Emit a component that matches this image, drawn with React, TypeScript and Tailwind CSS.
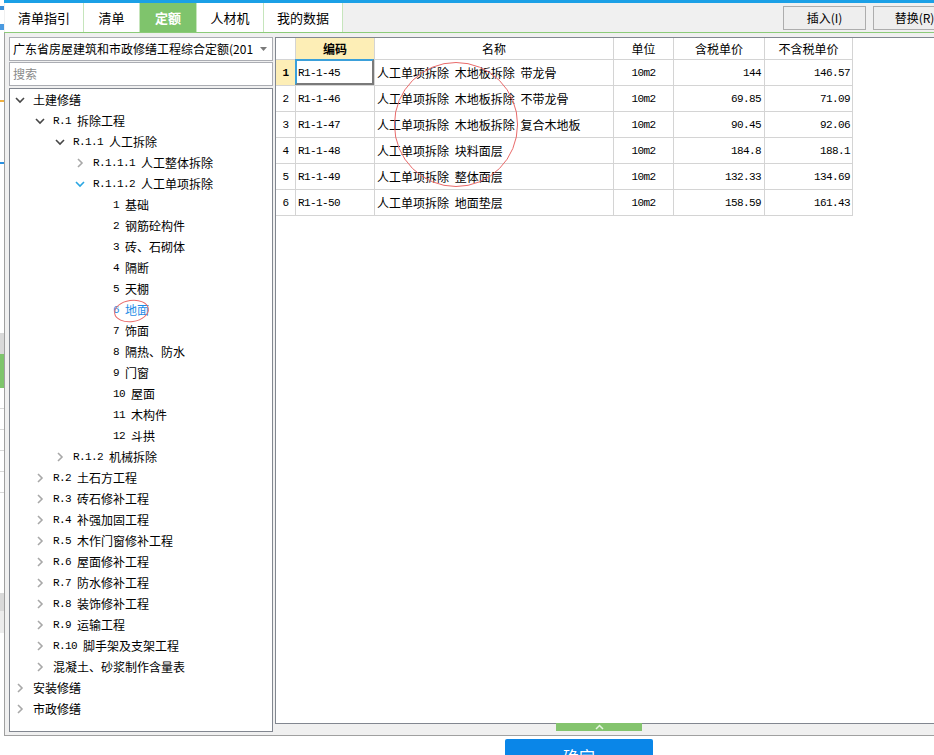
import React from 'react'

type Chevron = 'open' | 'closed' | 'hover' | 'none'
type TreeNode = { level: number; code?: string; name: string; chevron: Chevron; active?: boolean }

const tree: TreeNode[] = [
  { level: 0, name: '土建修缮', chevron: 'open' },
  { level: 1, code: 'R.1', name: '拆除工程', chevron: 'open' },
  { level: 2, code: 'R.1.1', name: '人工拆除', chevron: 'open' },
  { level: 3, code: 'R.1.1.1', name: '人工整体拆除', chevron: 'closed' },
  { level: 3, code: 'R.1.1.2', name: '人工单项拆除', chevron: 'hover' },
  { level: 4, code: '1', name: '基础', chevron: 'none' },
  { level: 4, code: '2', name: '钢筋砼构件', chevron: 'none' },
  { level: 4, code: '3', name: '砖、石砌体', chevron: 'none' },
  { level: 4, code: '4', name: '隔断', chevron: 'none' },
  { level: 4, code: '5', name: '天棚', chevron: 'none' },
  { level: 4, code: '6', name: '地面', chevron: 'none', active: true },
  { level: 4, code: '7', name: '饰面', chevron: 'none' },
  { level: 4, code: '8', name: '隔热、防水', chevron: 'none' },
  { level: 4, code: '9', name: '门窗', chevron: 'none' },
  { level: 4, code: '10', name: '屋面', chevron: 'none' },
  { level: 4, code: '11', name: '木构件', chevron: 'none' },
  { level: 4, code: '12', name: '斗拱', chevron: 'none' },
  { level: 2, code: 'R.1.2', name: '机械拆除', chevron: 'closed' },
  { level: 1, code: 'R.2', name: '土石方工程', chevron: 'closed' },
  { level: 1, code: 'R.3', name: '砖石修补工程', chevron: 'closed' },
  { level: 1, code: 'R.4', name: '补强加固工程', chevron: 'closed' },
  { level: 1, code: 'R.5', name: '木作门窗修补工程', chevron: 'closed' },
  { level: 1, code: 'R.6', name: '屋面修补工程', chevron: 'closed' },
  { level: 1, code: 'R.7', name: '防水修补工程', chevron: 'closed' },
  { level: 1, code: 'R.8', name: '装饰修补工程', chevron: 'closed' },
  { level: 1, code: 'R.9', name: '运输工程', chevron: 'closed' },
  { level: 1, code: 'R.10', name: '脚手架及支架工程', chevron: 'closed' },
  { level: 1, name: '混凝土、砂浆制作含量表', chevron: 'closed' },
  { level: 0, name: '安装修缮', chevron: 'closed' },
  { level: 0, name: '市政修缮', chevron: 'closed' },
]

const rows = [
  ['R1-1-45', '人工单项拆除 木地板拆除 带龙骨', '10m2', '144', '146.57'],
  ['R1-1-46', '人工单项拆除 木地板拆除 不带龙骨', '10m2', '69.85', '71.09'],
  ['R1-1-47', '人工单项拆除 木地板拆除 复合木地板', '10m2', '90.45', '92.06'],
  ['R1-1-48', '人工单项拆除 块料面层', '10m2', '184.8', '188.1'],
  ['R1-1-49', '人工单项拆除 整体面层', '10m2', '132.33', '134.69'],
  ['R1-1-50', '人工单项拆除 地面垫层', '10m2', '158.59', '161.43'],
]

const tabs = ['清单指引', '清单', '定额', '人材机', '我的数据']
const tabWidths = ['w-[79px]', 'w-[56px]', 'w-[57px]', 'w-[67px]', 'w-[79px]']

const mono = "font-['Liberation_Mono','Noto_Sans_CJK_SC',monospace] text-[11px] tracking-[-0.6px]"

function Chev({ kind }: { kind: Chevron }) {
  if (kind === 'none') return <span className="w-[10px] shrink-0" />
  const open = kind !== 'closed'
  const color = kind === 'hover' ? '#2aa6e2' : kind === 'open' ? '#474747' : '#a8a8a8'
  return (
    <svg width="10" height="10" viewBox="0 0 10 10" className="shrink-0">
      <polyline
        points={open ? '1,3 5,7 9,3' : '3,1 7,5 3,9'}
        fill="none"
        stroke={color}
        strokeWidth="1.6"
      />
    </svg>
  )
}

function TreeRow({ node }: { node: TreeNode }) {
  const pad = ['pl-[5px]', 'pl-[25px]', 'pl-[45px]', 'pl-[65px]', 'pl-[85px]'][node.level]
  return (
    <div className={`flex h-[21px] items-center ${pad} ${node.active ? 'text-[#1e8be6]' : ''}`}>
      <Chev kind={node.chevron} />
      <span className="ml-[8px] flex items-center whitespace-nowrap">
        {node.code && <span className={`${mono} mr-[6px]`}>{node.code}</span>}
        <span>{node.name}</span>
      </span>
    </div>
  )
}

export default function App() {
  return (
    <div className="relative flex h-[755px] w-[934px] overflow-hidden bg-white text-[12px] leading-[16px] text-black font-['Noto_Sans_CJK_SC','Noto_Sans',sans-serif]">
      {/* sliver of the window behind */}
      <div className="flex w-[4px] shrink-0 flex-col bg-white">
        <div className="h-[6px] shrink-0" />
        <div className="h-[4px] shrink-0 bg-[#3a8fd8]" />
        <div className="h-[14px] shrink-0" />
        <div className="h-[6px] shrink-0 bg-[#4a9ae0]" />
        <div className="h-[70px] shrink-0" />
        <div className="h-[2px] shrink-0 bg-[#f0b040]" />
        <div className="h-[60px] shrink-0" />
        <div className="h-[2px] shrink-0 bg-[#2a90e0]" />
        <div className="h-[170px] shrink-0 border-b border-[#d8d8d8]" />
        <div className="h-[20px] shrink-0 bg-[#d9d9d9]" />
        <div className="h-[34px] shrink-0 bg-[#7ec56c]" />
        <div className="h-[21px] shrink-0 border-b border-[#d8d8d8]" />
        <div className="h-[21px] shrink-0 border-b border-[#d8d8d8]" />
        <div className="h-[21px] shrink-0 border-b border-[#d8d8d8]" />
        <div className="h-[21px] shrink-0 border-b border-[#d8d8d8]" />
        <div className="h-[21px] shrink-0 border-b border-[#d8d8d8]" />
        <div className="h-[100px] shrink-0" />
        <div className="h-[18px] shrink-0 bg-[#d9d9d9]" />
        <div className="h-[22px] shrink-0 bg-[#ececec]" />
      </div>

      <div className="flex w-[960px] shrink-0 flex-col">
        <div className="h-[3px] shrink-0 bg-[#1ba0e6]" />
        {/* tabs + buttons */}
        <div className="flex h-[29px] shrink-0 items-stretch bg-[#f0f0f0]">
          <div className="w-px" />
          {tabs.map((t, i) => (
            <div
              key={t}
              className={`${tabWidths[i]} flex items-center justify-center border-r border-[#c6e5bc] text-[13px] ${
                t === '定额' ? 'bg-[#7fc46c] font-bold text-white' : 'bg-white'
              }`}
            >
              {t}
            </div>
          ))}
          <div className="flex-1" />
          <div className="flex items-center gap-[7px] pr-[8px]">
            <button className="h-[24px] w-[83px] border border-[#adadad] bg-[#eeeeee]">插入(I)</button>
            <button className="h-[24px] w-[83px] border border-[#adadad] bg-[#eeeeee]">替换(R)</button>
          </div>
        </div>
        <div className="h-px shrink-0 bg-[#8ccb79]" />

        {/* body */}
        <div className="flex h-[703px] shrink-0 border-b border-l border-[#a0a0a0] bg-[#f0f0f0] pl-[4px] pt-[4px]">
          <div className="flex w-[264px] flex-col pb-[3px]">
            <div className="flex h-[24px] shrink-0 items-center justify-between border border-[#abadb3] bg-white pl-[3px] pr-[5px]">
              <span className="whitespace-nowrap">广东省房屋建筑和市政修缮工程综合定额(201</span>
              <svg width="7" height="4" viewBox="0 0 7 4">
                <polygon points="0,0 7,0 3.5,4" fill="#7a7a7a" />
              </svg>
            </div>
            <div className="mt-[1px] flex h-[24px] shrink-0 items-center border border-[#abadb3] bg-white pl-[3px] text-[#8a8a8a]">
              搜索
            </div>
            <div className="mt-[2px] flex-1 border border-[#828790] bg-white">
              {tree.map((n, i) => (
                <TreeRow key={i} node={n} />
              ))}
            </div>
          </div>

          <div className="ml-[2px] flex flex-1 flex-col">
            <div className="h-[687px] shrink-0 border border-[#828790] bg-white">
              {/* header */}
              <div className="flex h-[22px]">
                <div className="w-[20px] border-b border-r border-[#d4d4d4]" />
                <div className="flex w-[79px] items-center justify-center border-b border-r border-[#d4d4d4] bg-[#fdeeb6] font-bold">
                  编码
                </div>
                <div className="flex w-[239px] items-center justify-center border-b border-r border-[#d4d4d4]">名称</div>
                <div className="flex w-[60px] items-center justify-center border-b border-r border-[#d4d4d4]">单位</div>
                <div className="flex w-[91px] items-center justify-center border-b border-r border-[#d4d4d4]">含税单价</div>
                <div className="flex w-[88px] items-center justify-center border-b border-r border-[#d4d4d4]">不含税单价</div>
              </div>
              {rows.map((r, i) => (
                <div key={r[0]} className="flex h-[26px]">
                  <div
                    className={`flex w-[20px] items-center justify-center border-b border-r border-[#d4d4d4] ${mono} ${
                      i === 0 ? 'bg-[#fdeeb6] font-bold' : ''
                    }`}
                  >
                    {i + 1}
                  </div>
                  <div className={`relative flex w-[79px] items-center border-b border-r border-[#d4d4d4] pl-[2px] ${mono}`}>
                    {r[0]}
                    {i === 0 && (
                      <div className="absolute -left-px -top-px bottom-0 right-0 border-b-2 border-l-2 border-r-2 border-t-2 border-b-[#7a7a7a] border-l-[#3ba0da] border-r-[#7a7a7a] border-t-[#3ba0da]" />
                    )}
                  </div>
                  <div className="flex w-[239px] items-center border-b border-r border-[#d4d4d4] pl-[2px] [word-spacing:3px] whitespace-nowrap">
                    {r[1]}
                  </div>
                  <div className={`flex w-[60px] items-center justify-center border-b border-r border-[#d4d4d4] ${mono}`}>{r[2]}</div>
                  <div className={`flex w-[91px] items-center justify-end border-b border-r border-[#d4d4d4] pr-[3px] ${mono}`}>{r[3]}</div>
                  <div className={`flex w-[88px] items-center justify-end border-b border-r border-[#d4d4d4] pr-[2px] ${mono}`}>{r[4]}</div>
                </div>
              ))}
            </div>
            <div className="flex h-[11px] shrink-0 items-start">
              <div className="-mt-px ml-[281px] flex h-[8px] w-[86px] items-center justify-center bg-[#84c46e]">
                <svg width="9" height="6" viewBox="0 0 9 6">
                  <polyline points="1,5 4.5,1.5 8,5" fill="none" stroke="#e6f5e0" strokeWidth="1.5" />
                </svg>
              </div>
            </div>
          </div>
        </div>

        {/* footer */}
        <div className="flex shrink-0 pl-[501px] pt-[3px]">
          <button className="flex h-[34px] w-[148px] items-center justify-center rounded-[2px] bg-[#0a86e8] text-[16px] text-white">
            确定
          </button>
        </div>
      </div>

      {/* annotations */}
      <div className="pointer-events-none absolute left-[394px] top-[62px] h-[125px] w-[124px] rounded-full border border-[#e96a6a]" />
      <div className="pointer-events-none absolute left-[114px] top-[300px] h-[22px] w-[35px] -rotate-[8deg] rounded-[50%] border border-[#e96a6a]" />
    </div>
  )
}
